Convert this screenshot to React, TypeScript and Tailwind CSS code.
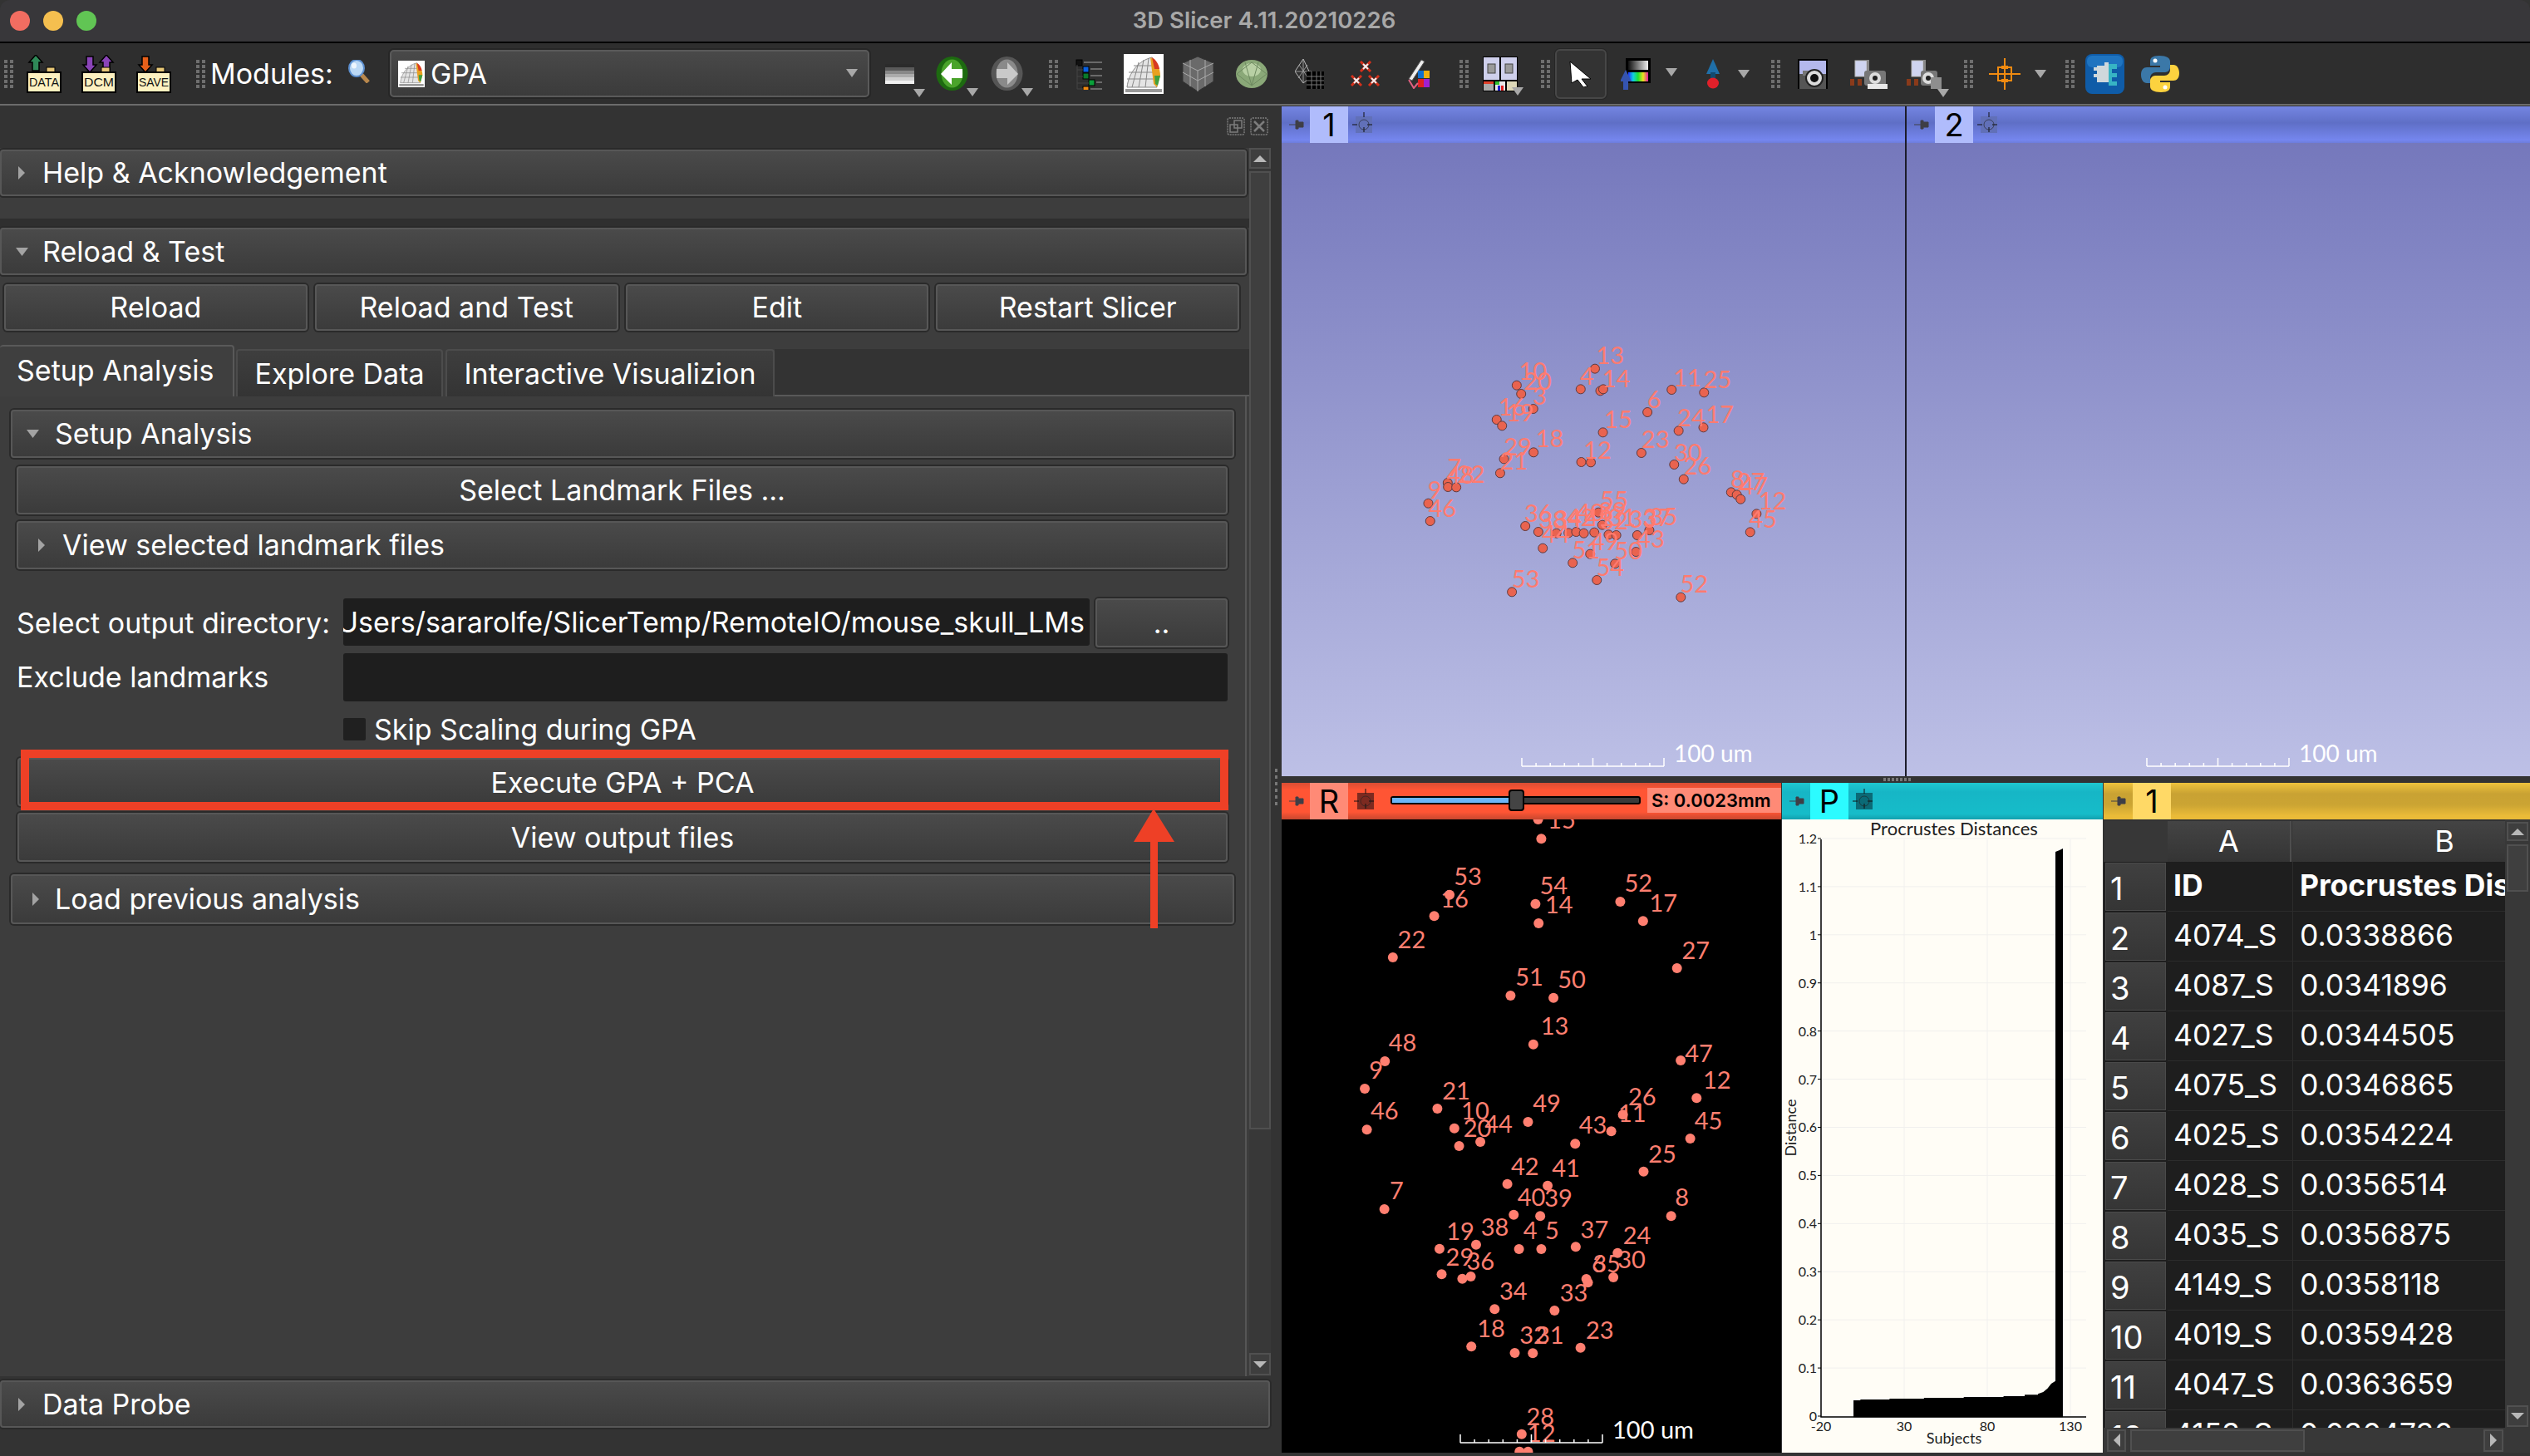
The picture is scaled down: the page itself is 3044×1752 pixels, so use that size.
import React from "react";

type P = [number, number];
type L = [string, number, number];

const FONT = "[font-family:Inter,sans-serif]";

/* ---------- toolbar pieces ---------- */
function Grip({ className }: { className: string }) {
  return (
    <div className={`grid grid-cols-2 gap-x-[3px] gap-y-[2px] w-[11px] shrink-0 ${className}`}>
      {Array.from({ length: 12 }).map((_, i) => (
        <div key={i} className="w-[4px] h-[4px] bg-[#6e6e6e]" />
      ))}
    </div>
  );
}

function Drop({ className }: { className: string }) {
  return (
    <svg className={`absolute ${className}`} width="14" height="10" viewBox="0 0 14 10">
      <path d="M0 0H14L7 10Z" fill="#a8a8a8" />
    </svg>
  );
}

function Clip({ label, arrows }: { label: string; arrows: { x: number; up: boolean; c: string }[] }) {
  return (
    <svg width="42" height="46" viewBox="0 0 42 46">
      {arrows.map((a, i) => (
        <path
          key={i}
          d={
            a.up
              ? `M${a.x} 0l8 9h-4v10h-8v-10h-4z`
              : `M${a.x - 4} 2h8v10h4l-8 9-8-9h4z`
          }
          fill={a.c}
          stroke="#000"
          strokeWidth="1.5"
        />
      ))}
      <rect x="24" y="15" width="10" height="8" fill="#e8c878" stroke="#000" />
      <rect x="1" y="21" width="40" height="24" fill="#fdf1c0" stroke="#000" strokeWidth="2" />
      <text x="21" y="38" textAnchor="middle" fontSize="14" textLength="36" lengthAdjust="spacingAndGlyphs" fill="#111" className="[font-family:'Liberation_Sans',sans-serif]">
        {label}
      </text>
    </svg>
  );
}

function Magnifier() {
  return (
    <svg width="26" height="28" viewBox="0 0 26 28">
      <path d="M16 18l8 9" stroke="#b8874c" strokeWidth="5" />
      <ellipse cx="10" cy="10" rx="9" ry="10" fill="#bcd9f5" stroke="#5c8fcf" strokeWidth="2" />
      <ellipse cx="7" cy="7" rx="3" ry="3.5" fill="#eef6fd" />
    </svg>
  );
}

function GpaGlyph({ w, h }: { w: number; h: number }) {
  return (
    <svg width={w} height={h} viewBox="0 0 48 48">
      <rect width="48" height="48" fill="#fff" />
      <path d="M4 40C6 22 18 8 34 4L40 40Z" fill="#e4e4e4" stroke="#888" />
      <path d="M4 30H38M6 22H38M12 14H38M10 40L18 10M18 40L24 7M26 40L30 5" stroke="#888" strokeWidth="1" fill="none" />
      <path d="M32 4C40 8 44 18 44 26L40 40L36 36Z" fill="#e8a020" />
      <path d="M34 4C39 7 42 12 43 18L37 18Z" fill="#d83a20" />
      <path d="M37 26H44L41 38L38 36Z" fill="#3f9f3f" />
      <rect x="2" y="42" width="44" height="4" fill="#999" />
    </svg>
  );
}

function Arrow({ c, dir }: { c: string; dir: "l" | "r" }) {
  return (
    <svg width="39" height="41" viewBox="0 0 39 41">
      <ellipse cx="19.5" cy="20.5" rx="19" ry="20.5" fill={c} />
      <ellipse cx="19.5" cy="20.5" rx="13" ry="17" fill={dir === "l" ? "#4aa32b" : "#8a8a8a"} />
      {dir === "l" ? (
        <path d="M6 21L19 7v8h13v11H19v8z" fill="#fff" />
      ) : (
        <path d="M33 21L20 7v8H7v11h13v8z" fill="#c9c9c9" />
      )}
    </svg>
  );
}

function Layers() {
  const cols = ["#2b2b2b", "#5a5a5a", "#888", "#ababab", "#cfcfcf", "#f0f0f0"];
  return (
    <div className="flex flex-col w-[35px]">
      {cols.map((c) => (
        <div key={c} className="h-[4px]" style={{ background: c }} />
      ))}
    </div>
  );
}

function Tree() {
  const items: [number, number, string][] = [
    [2, 3, "#111"],
    [10, 11, "#0a60e0"],
    [10, 19, "#0a7a2a"],
    [17, 27, "#0aa03a"],
    [10, 35, "#f08a10"],
  ];
  return (
    <svg width="38" height="38" viewBox="0 0 38 38">
      {items.map(([x, y, c], i) => (
        <g key={i}>
          <rect x={x} y={y - 1} width="7" height="7" fill={c} stroke="#000" />
          <rect x={x + 9} y={y + 1} width={24 - x} height="2" fill="#6a6a6a" />
        </g>
      ))}
      <path d="M3 8V37M3 14H10M3 22H10M3 30H17M3 37H10" stroke="#444" fill="none" />
    </svg>
  );
}

function Cube() {
  return (
    <svg width="39" height="44" viewBox="0 0 39 44">
      <path d="M19 1L38 9V31L19 43L1 31V9Z" fill="#6a6a6a" stroke="#333" />
      <path d="M1 9L19 18L38 9M19 18V43M1 20L19 30L38 20M10 5V37M28 5V37" stroke="#aaa" fill="none" />
    </svg>
  );
}

function Ellipsoid() {
  return (
    <svg width="40" height="36" viewBox="0 0 40 36">
      <ellipse cx="20" cy="18" rx="19" ry="17" fill="#8aa878" />
      <ellipse cx="20" cy="13" rx="11" ry="8" fill="#b8d0a4" />
      <path d="M2 18L20 4L38 18L20 32ZM12 4L20 32L28 4" stroke="#6e8a60" fill="none" />
    </svg>
  );
}

function MeshIcon() {
  return (
    <svg width="36" height="38" viewBox="0 0 36 38">
      <path d="M10 1L20 22L10 30L0 16Z" fill="none" stroke="#bbb" />
      <path d="M10 1V30M0 16H20M5 8L16 24M15 8L4 24" stroke="#999" fill="none" />
      <rect x="14" y="16" width="21" height="21" fill="#000" />
      <path d="M14 22H35M14 27H35M14 32H35M20 16V37M26 16V37M31 16V37" stroke="#777" />
    </svg>
  );
}

function Markups() {
  const pts: P[] = [[18, 7], [7, 24], [28, 24]];
  return (
    <svg width="36" height="32" viewBox="0 0 36 32">
      {pts.map(([x, y], i) => (
        <g key={i} stroke="#f0f0f0" strokeWidth="2">
          <path d={`M${x - 6} ${y - 6}L${x + 6} ${y + 6}M${x + 6} ${y - 6}L${x - 6} ${y + 6}`} stroke="#d8301a" strokeWidth="3" />
          <path d={`M${x - 3} ${y - 3}L${x + 3} ${y + 3}M${x + 3} ${y - 3}L${x - 3} ${y + 3}`} />
        </g>
      ))}
    </svg>
  );
}

function Pen() {
  return (
    <svg width="28" height="36" viewBox="0 0 28 36">
      <path d="M2 24L17 1L21 3L6 26Z" fill="#eee" stroke="#555" />
      <rect x="13" y="14" width="7" height="9" fill="#1070d0" />
      <rect x="20" y="14" width="7" height="9" fill="#f0b010" />
      <rect x="13" y="24" width="7" height="10" fill="#e02020" />
      <rect x="20" y="24" width="7" height="10" fill="#a020d0" />
      <path d="M2 25L8 35L13 29" fill="none" stroke="#e06080" strokeWidth="2" />
    </svg>
  );
}

function LayoutIcon() {
  return (
    <svg width="42" height="42" viewBox="0 0 42 42">
      <rect width="42" height="42" fill="#000" />
      <rect x="1" y="1" width="19" height="27" fill="#cfd0ec" />
      <rect x="22" y="1" width="19" height="27" fill="#cfd0ec" />
      <rect x="6" y="9" width="9" height="11" fill="#9a9a9a" stroke="#444" />
      <rect x="27" y="9" width="9" height="11" fill="#9a9a9a" stroke="#444" />
      <rect x="1" y="30" width="12" height="11" fill="#aaa" />
      <rect x="1" y="30" width="12" height="3" fill="#e0402a" />
      <rect x="15" y="30" width="12" height="11" fill="#e8e8e8" />
      <rect x="15" y="30" width="5" height="4" fill="#30c030" />
      <rect x="18" y="35" width="3" height="6" fill="#2020d0" />
      <rect x="22" y="35" width="3" height="6" fill="#e02020" />
      <rect x="29" y="30" width="12" height="11" fill="#ddd8b8" />
    </svg>
  );
}

function Cursor() {
  return (
    <svg width="28" height="32" viewBox="0 0 28 32">
      <path d="M1 1L26 22H15L22 31L17 32L10 23L3 27Z" fill="#fff" stroke="#000" />
    </svg>
  );
}

function WL() {
  return (
    <svg width="36" height="38" viewBox="0 0 36 38">
      <defs>
        <linearGradient id="wlg" x1="0" x2="1">
          <stop offset="0" stopColor="#111" />
          <stop offset="1" stopColor="#eee" />
        </linearGradient>
        <linearGradient id="wlr" x1="0" x2="1">
          <stop offset="0" stopColor="#2030ff" />
          <stop offset=".25" stopColor="#10d0e0" />
          <stop offset=".5" stopColor="#20e030" />
          <stop offset=".75" stopColor="#f0e020" />
          <stop offset="1" stopColor="#e020a0" />
        </linearGradient>
      </defs>
      <rect x="6" y="0" width="30" height="30" fill="#000" />
      <rect x="9" y="3" width="24" height="11" fill="url(#wlg)" />
      <rect x="9" y="17" width="24" height="11" fill="url(#wlr)" />
      <path d="M6 14l7 14H9v10H3V28H-1z" fill="#3554b0" />
    </svg>
  );
}

function Fiducial() {
  return (
    <svg width="20" height="36" viewBox="0 0 20 36">
      <path d="M10 0L18 18H2Z" fill="#1f6fa8" />
      <rect x="7" y="16" width="6" height="8" fill="#124a70" />
      <ellipse cx="10" cy="29" rx="7" ry="6.5" fill="#e0202a" />
    </svg>
  );
}

function Camera() {
  return (
    <svg width="36" height="36" viewBox="0 0 36 36">
      <rect width="36" height="36" fill="#000" />
      <rect x="2" y="2" width="32" height="32" fill="#b4b8ec" />
      <rect x="2" y="18" width="32" height="18" fill="#555" />
      <rect x="6" y="14" width="7" height="6" fill="#777" />
      <circle cx="20" cy="23" r="10" fill="#dcdcdc" stroke="#222" strokeWidth="2" />
      <circle cx="20" cy="23" r="5" fill="#111" />
    </svg>
  );
}

function CapIcon({ extra }: { extra?: boolean }) {
  return (
    <svg width="46" height="36" viewBox="0 0 46 36">
      <rect x="7" y="2" width="14" height="19" fill="#cfd4f0" stroke="#bbb" />
      <rect x="21" y="1" width="3" height="18" fill="#888" />
      <rect x="1" y="24" width="5" height="8" fill="#8a3a1a" />
      <rect x="10" y="24" width="5" height="8" fill="#8a3a1a" />
      <rect x="18" y="14" width={extra ? 20 : 26} height="18" rx="3" fill="#777" />
      <circle cx={extra ? 27 : 31} cy="23" r="7" fill="#ddd" />
      <circle cx={extra ? 27 : 31} cy="23" r="3" fill="#222" />
      {extra ? <rect x="30" y="22" width="13" height="14" fill="#8e8e8e" /> : <rect x="22" y="30" width="24" height="6" fill="#e8e8e8" />}
    </svg>
  );
}

function Cross() {
  return (
    <svg width="38" height="38" viewBox="0 0 38 38">
      <g stroke="#f08a10" fill="none" strokeWidth="2">
        <path d="M19 0V38M0 19H38" />
        <rect x="11" y="11" width="16" height="16" />
        <path d="M15 11H23M15 27H23" strokeWidth="4" />
      </g>
    </svg>
  );
}

function Ext() {
  return (
    <svg width="47" height="48" viewBox="0 0 47 48">
      <rect width="47" height="48" rx="8" fill="#0f5ca8" />
      <rect x="2" y="2" width="43" height="14" rx="6" fill="#1f74c0" />
      <path d="M14 14h9v-4h5v4h3v8h-3v4h3v8H14v-6h-4v-4h4v-4h-4v-4h4z" fill="#cfd8dc" />
      <path d="M28 12h10v6h-6v5h6v5h-6v5h6v5H28z" fill="#37b4c4" />
    </svg>
  );
}

function Python() {
  const blue = "M23 2c-9 0-11 3-11 7v5h12v2H8c-4 0-7 3-7 9s3 10 7 10h4v-6c0-4 3-7 7-7h11c3 0 6-3 6-6V9c0-4-4-7-13-7z";
  return (
    <svg width="48" height="48" viewBox="0 0 48 48">
      <path d={blue} fill="#3b78a8" />
      <path d={blue} fill="#fcd23f" transform="rotate(180 24 24)" />
      <circle cx="18" cy="8" r="2.5" fill="#fff" />
      <circle cx="30" cy="40" r="2.5" fill="#fff" />
    </svg>
  );
}

function ToolBar() {
  return (
    <div className="h-[73px] shrink-0 bg-[#2e2e2e] flex items-center">
      <Grip className="ml-[5px]" />
      <div className="ml-[16px] w-[42px] shrink-0">
        <Clip label="DATA" arrows={[{ x: 11, up: true, c: "#2f8a58" }]} />
      </div>
      <div className="ml-[24px] w-[42px] shrink-0">
        <Clip label="DCM" arrows={[{ x: 10, up: false, c: "#8a44b8" }, { x: 30, up: true, c: "#8a44b8" }]} />
      </div>
      <div className="ml-[24px] w-[42px] shrink-0">
        <Clip label="SAVE" arrows={[{ x: 11, up: false, c: "#e8601a" }]} />
      </div>
      <Grip className="ml-[30px]" />
      <div className="ml-[6px] w-[146px] shrink-0 text-white text-[34px] leading-none whitespace-nowrap">Modules:</div>
      <div className="ml-[20px] w-[26px] shrink-0 -mt-[6px]">
        <Magnifier />
      </div>
      <div className="ml-[24px] w-[577px] h-[57px] shrink-0 rounded-[5px] bg-gradient-to-b from-[#494949] to-[#3b3b3b] border-2 border-[#5a5a5a] shadow-[0_0_0_2px_#262626] flex items-center pl-[8px] relative">
        <GpaGlyph w={32} h={32} />
        <span className="ml-[7px] text-white text-[34px] leading-none">GPA</span>
        <Drop className="right-[12px] top-[21px]" />
      </div>
      <div className="ml-[19px] w-[35px] shrink-0 relative">
        <Layers />
        <Drop className="left-[34px] top-[30px]" />
      </div>
      <div className="ml-[26px] w-[39px] shrink-0 relative">
        <Arrow c="#1d6a10" dir="l" />
        <Drop className="left-[37px] top-[38px]" />
      </div>
      <div className="ml-[27px] w-[39px] shrink-0 relative">
        <Arrow c="#565656" dir="r" />
        <Drop className="left-[37px] top-[38px]" />
      </div>
      <Grip className="ml-[31px]" />
      <div className="ml-[20px] w-[38px] shrink-0"><Tree /></div>
      <div className="ml-[21px] w-[48px] shrink-0"><GpaGlyph w={48} h={48} /></div>
      <div className="ml-[22px] w-[39px] shrink-0"><Cube /></div>
      <div className="ml-[25px] w-[40px] shrink-0"><Ellipsoid /></div>
      <div className="ml-[32px] w-[36px] shrink-0"><MeshIcon /></div>
      <div className="ml-[31px] w-[36px] shrink-0"><Markups /></div>
      <div className="ml-[32px] w-[28px] shrink-0"><Pen /></div>
      <Grip className="ml-[35px]" />
      <div className="ml-[17px] w-[42px] shrink-0 relative">
        <LayoutIcon />
        <Drop className="left-[35px] top-[37px]" />
      </div>
      <Grip className="ml-[28px]" />
      <div className="ml-[6px] w-[62px] h-[60px] shrink-0 rounded-[6px] bg-[#333] border-2 border-[#474747] shadow-[0_0_0_1px_#262626] flex items-center justify-center">
        <Cursor />
      </div>
      <div className="ml-[17px] w-[36px] shrink-0 relative">
        <WL />
        <Drop className="left-[54px] top-[12px]" />
      </div>
      <div className="ml-[65px] w-[20px] shrink-0 relative">
        <Fiducial />
        <Drop className="left-[40px] top-[13px]" />
      </div>
      <Grip className="ml-[60px]" />
      <div className="ml-[21px] w-[36px] shrink-0"><Camera /></div>
      <div className="ml-[26px] w-[46px] shrink-0"><CapIcon /></div>
      <div className="ml-[22px] w-[46px] shrink-0 relative">
        <CapIcon extra />
        <Drop className="left-[38px] top-[36px]" />
      </div>
      <Grip className="ml-[24px]" />
      <div className="ml-[19px] w-[38px] shrink-0 relative">
        <Cross />
        <Drop className="left-[55px] top-[14px]" />
      </div>
      <Grip className="ml-[54px]" />
      <div className="ml-[13px] w-[47px] shrink-0"><Ext /></div>
      <div className="ml-[19px] w-[48px] shrink-0"><Python /></div>
    </div>
  );
}

/* ---------- left panel ---------- */
const BTN =
  "rounded-[4px] bg-gradient-to-b from-[#4a4a4a] to-[#3b3b3b] border-2 border-[#575757] shadow-[0_0_0_2px_#2a2a2a] text-white text-[34px] leading-none flex items-center whitespace-nowrap";

function Tri({ open, className }: { open: boolean; className: string }) {
  return open ? (
    <svg className={className} width="15" height="10" viewBox="0 0 15 10">
      <path d="M0 0H15L7.5 10Z" fill="#a3a3a3" />
    </svg>
  ) : (
    <svg className={className} width="8" height="16" viewBox="0 0 8 16">
      <path d="M0 0L8 8L0 16Z" fill="#a3a3a3" />
    </svg>
  );
}

function ScrollButton({ up, className }: { up: boolean; className: string }) {
  return (
    <div className={`bg-[#3e3e3e] border-2 border-[#505050] flex items-center justify-center shrink-0 ${className}`}>
      <svg width="16" height="8" viewBox="0 0 16 8">
        <path d={up ? "M8 0L16 8H0Z" : "M0 0H16L8 8Z"} fill="#b8b8b8" />
      </svg>
    </div>
  );
}

function LeftPanel() {
  return (
    <div className="w-[1542px] shrink-0 bg-[#333] flex flex-col relative">
      <div className="h-[51px] shrink-0 flex justify-end items-center gap-[6px] pr-[16px] pb-[2px]">
        <svg width="22" height="22" viewBox="0 0 22 22" fill="none" stroke="#7c7c7c" strokeWidth="1.5">
          <rect x="1" y="1" width="20" height="20" rx="2" strokeDasharray="2 1" />
          <rect x="4" y="9" width="9" height="9" />
          <rect x="9" y="4" width="9" height="9" />
        </svg>
        <svg width="22" height="22" viewBox="0 0 22 22" fill="none" stroke="#7c7c7c" strokeWidth="1.5">
          <rect x="1" y="1" width="20" height="20" rx="2" strokeDasharray="2 1" />
          <path d="M5 5L17 17M17 5L5 17" strokeWidth="2.5" />
        </svg>
      </div>

      <div className="h-[1478px] shrink-0 flex">
        <div className="w-[1503px] shrink-0 bg-[#3d3d3d] flex flex-col relative pt-[2px]">
          <div className={`${BTN} h-[56px] w-[1500px]`}>
            <Tri open={false} className="ml-[20px]" />
            <span className="ml-[21px]">Help &amp; Acknowledgement</span>
          </div>
          <div className="mt-[27px] h-[11px] bg-[#2f2f2f] shrink-0" />
          <div className={`${BTN} h-[57px] w-[1500px] shrink-0`}>
            <Tri open className="ml-[17px]" />
            <span className="ml-[17px]">Reload &amp; Test</span>
          </div>
          <div className="mt-[11px] ml-[5px] w-[1486px] grid grid-cols-4 gap-[9px]">
            {["Reload", "Reload and Test", "Edit", "Restart Slicer"].map((t) => (
              <div key={t} className={`${BTN} h-[56px] justify-center`}>{t}</div>
            ))}
          </div>

          <div className="mt-[17px] h-[62px] flex items-end shrink-0">
            <div className="w-[282px] h-[62px] rounded-t-[4px] bg-[#3f3f3f] border-t-2 border-r-2 border-[#595959] text-white text-[34px] leading-none flex items-center pl-[20px] pb-[2px] whitespace-nowrap">
              Setup Analysis
            </div>
            <div className="ml-[2px] w-[249px] h-[57px] rounded-t-[4px] bg-gradient-to-b from-[#3e3e3e] to-[#343434] border-2 border-b-0 border-[#4c4c4c] text-white text-[34px] leading-none flex items-center justify-center">
              Explore Data
            </div>
            <div className="ml-[3px] w-[396px] h-[57px] rounded-t-[4px] bg-gradient-to-b from-[#3e3e3e] to-[#343434] border-2 border-b-0 border-[#4c4c4c] text-white text-[34px] leading-none flex items-center justify-center whitespace-nowrap">
              Interactive Visualizion
            </div>
            <div className="flex-1 h-[57px] bg-[#333] border-b-2 border-[#595959]" />
          </div>

          <div className="flex-1 flex flex-col border-r-2 border-[#565656] mr-[3px] relative">
            <div className={`${BTN} mt-[16px] ml-[13px] w-[1472px] h-[58px]`}>
              <Tri open className="ml-[17px]" />
              <span className="ml-[19px]">Setup Analysis</span>
            </div>
            <div className={`${BTN} mt-[10px] ml-[20px] w-[1457px] h-[58px] justify-center`}>Select Landmark Files ...</div>
            <div className={`${BTN} mt-[8px] ml-[20px] w-[1457px] h-[58px]`}>
              <Tri open={false} className="ml-[24px]" />
              <span className="ml-[21px]">View selected landmark files</span>
            </div>

            <div className="mt-[35px] flex h-[59px] shrink-0">
              <div className="w-[413px] pl-[20px] text-white text-[34px] leading-none flex items-center whitespace-nowrap">Select output directory:</div>
              <div className="w-[898px] h-[57px] rounded-[3px] bg-[#1e1e1e] text-white text-[34px] leading-none flex items-center justify-end overflow-hidden whitespace-nowrap pr-[6px]">
                /Users/sararolfe/SlicerTemp/RemoteIO/mouse_skull_LMs
              </div>
              <div className={`${BTN} ml-[7px] w-[159px] h-[59px] justify-center`}>..</div>
            </div>
            <div className="mt-[7px] flex h-[58px] shrink-0">
              <div className="w-[413px] pl-[20px] text-white text-[34px] leading-none flex items-center">Exclude landmarks</div>
              <div className="w-[1064px] rounded-[3px] bg-[#1e1e1e]" />
            </div>
            <div className="mt-[20px] ml-[413px] h-[27px] flex items-center shrink-0 text-white text-[34px] leading-none whitespace-nowrap">
              <div className="w-[27px] h-[27px] bg-[#202020] rounded-[2px]" />
              <span className="ml-[10px]">Skip Scaling during GPA</span>
            </div>
            <div className={`${BTN} mt-[21px] ml-[21px] w-[1456px] h-[58px] justify-center pt-[1px]`}>Execute GPA + PCA</div>
            <div className={`${BTN} mt-[8px] ml-[21px] w-[1456px] h-[59px] justify-center`}>View output files</div>
            <div className={`${BTN} mt-[15px] ml-[13px] w-[1472px] h-[60px]`}>
              <Tri open={false} className="ml-[24px]" />
              <span className="ml-[19px]">Load previous analysis</span>
            </div>
          </div>

          {/* annotation over the form */}
          <div className="absolute left-[25px] top-[724px] w-[1453px] h-[73px] border-[10px] border-[#ee4026]" />
          <svg className="absolute left-[1359px] top-[793px]" width="60" height="146" viewBox="0 0 60 146">
            <path d="M29 2L54 42H34V146H25V42H5Z" fill="#ee4026" />
          </svg>
        </div>

        <div className="w-[26px] shrink-0 bg-[#383838] flex flex-col">
          <ScrollButton up className="h-[25px] w-[26px]" />
          <div className="mt-[3px] h-[1153px] bg-[#3f3f3f] border-2 border-[#505050] shrink-0" />
          <div className="flex-1" />
          <ScrollButton up={false} className="h-[27px] w-[26px] mb-[1px]" />
        </div>
      </div>

      <div className={`${BTN} mt-[5px] h-[57px] w-[1528px] shrink-0`}>
        <Tri open={false} className="ml-[20px]" />
        <span className="ml-[21px]">Data Probe</span>
      </div>

      <div className="absolute left-[1534px] top-[798px] flex flex-col gap-[4px]">
        {[0, 1, 2, 3, 4, 5].map((i) => (
          <div key={i} className="w-[3px] h-[4px] bg-[#777]" />
        ))}
      </div>
    </div>
  );
}

/* ---------- view chrome ---------- */
function Pin() {
  return (
    <svg width="18" height="14" viewBox="0 0 18 14">
      <path d="M0 7H8M8 2H11V12H8ZM11 4H17V10H11Z" fill="#3e3e46" stroke="#3e3e46" strokeWidth="1" />
    </svg>
  );
}

function LinkGlyph({ tint }: { tint: string }) {
  return (
    <svg width="28" height="30" viewBox="0 0 28 30">
      <rect x="4" y="5" width="20" height="20" fill={tint} />
      <path d="M14 0V30M0 15H28" stroke="#111" strokeWidth="1" strokeDasharray="6 12 6" />
      <circle cx="14" cy="15" r="6" fill="none" stroke="#222" strokeWidth="1" opacity=".6" />
    </svg>
  );
}

/* ---------- overlays ---------- */
function Scale({ x0, x1, y }: { x0: number; x1: number; y: number }) {
  const w = (x1 - x0) / 10;
  let d = "";
  for (let i = 0; i <= 10; i++) {
    const h = i % 5 === 0 ? 10 : 4;
    d += `M${x0 + i * w} ${y}v-${h}`;
  }
  return <path d={`${d}M${x0} ${y}H${x1}`} stroke="#fff" strokeWidth="1.5" fill="none" />;
}

const LABEL = "[font-family:Lato,sans-serif] font-normal";

const d3: P[] = [[729,131],[684,205],[746,211],[755,205],[483,191],[497,222],[535,276],[420,315],[437,337],[970,207],[1072,217],[894,288],[992,355],[1070,343],[754,361],[536,433],[443,457],[431,508],[686,468],[716,469],[875,435],[978,477],[1008,530],[266,543],[267,558],[293,559],[205,617],[211,681],[1157,577],[1175,586],[1187,602],[1237,655],[1217,721],[510,699],[551,720],[565,779],[608,725],[646,724],[670,720],[694,725],[727,722],[740,650],[752,695],[772,730],[796,732],[862,732],[900,714],[858,792],[714,800],[659,832],[792,835],[735,894],[468,937],[999,956]];
const l3: L[] = [["13",733,113],["4",682,190],["14",752,197],["10",490,170],["20",505,207],["3",533,262],["16",425,300],["19",450,320],["11",975,195],["25",1070,200],["6",893,272],["24",988,340],["17",1078,328],["15",758,345],["18",543,415],["29",442,445],["21",430,495],["12",693,455],["23",875,418],["30",977,465],["26",1007,513],["7",265,520],["48",262,545],["22",295,543],["9",203,600],["46",205,667],["8",1155,560],["27",1175,570],["47",1185,585],["12",1243,640],["45",1213,705],["55",745,635],["36",507,685],["38",552,707],["34",600,705],["40",670,680],["42",640,700],["41",695,700],["39",740,675],["31",770,700],["32",745,710],["33",835,705],["37",880,700],["35",900,697],["44",562,760],["43",860,777],["49",715,785],["51",657,815],["50",790,820],["54",733,878],["53",467,920],["52",997,940]];

const dA: P[] = [[487,198],[493,268],[320,470],[291,547],[482,503],[488,573],[642,495],[685,565],[213,696],[749,735],[435,834],[516,842],[478,1010],[198,1071]];
const dB: P[] = [[160,30],[297,102],[786,64],[164,178],[329,173],[338,237],[378,222],[468,150],[647,124],[625,184],[557,229],[774,210],[686,329],[429,374],[505,380],[197,465],[441,485],[491,490],[738,490],[301,608],[370,593],[451,609],[493,609],[558,601],[637,623],[305,700],[344,716],[360,708],[629,711],[578,717],[581,730],[405,826],[518,831],[361,961],[443,984],[477,985],[567,965],[456,1277],[452,1340],[468,1340],[756,-72]];
const lA: L[] = [["15",505,232],["53",328,435],["16",303,515],["54",490,468],["14",500,537],["52",650,460],["17",697,530],["22",222,662],["27",758,702],["51",444,798],["50",524,808],["13",492,975],["48",205,1035],["9",168,1135],["47",764,1075],["12",798,1170],["21",306,1208]];
const lB: L[] = [["46",171,142],["10",342,140],["49",477,115],["26",657,90],["11",638,150],["20",346,205],["44",386,188],["43",564,193],["45",782,177],["25",695,297],["42",436,342],["41",513,347],["7",207,430],["40",448,452],["39",499,455],["8",745,453],["19",314,577],["38",379,560],["4",459,574],["5",500,574],["37",567,570],["24",647,590],["29",313,668],["36",352,683],["6",588,692],["35",590,692],["30",637,677],["34",414,793],["33",528,797],["18",372,928],["32",452,950],["31",483,950],["23",577,932],["28",465,1245],["12",467,1305]];

function View3D({ first }: { first: boolean }) {
  return (
    <div className={`relative flex flex-col ${first ? "w-[750px]" : "flex-1"}`}>
      <div className="h-[44px] shrink-0 bg-[linear-gradient(#7485e2,#5f6fc6_45%,#7586ee_92%,#6d7ddc)] flex items-center">
        <div className="ml-[9px] w-[18px]"><Pin /></div>
        <div className="ml-[7px] w-[46px] h-[44px] bg-[#b0bcfc] text-black text-[38px] leading-[44px] text-center">{first ? "1" : "2"}</div>
        <div className="ml-[5px] w-[28px]"><LinkGlyph tint="#6170b8" /></div>
      </div>
      <div className="flex-1 relative bg-[linear-gradient(#7578bc,#bdc0e6)]">
        <svg className="absolute inset-0 w-full h-full" viewBox={first ? "1542 172 750 762" : "2294 172 750 762"}>
          {first &&
            d3.map(([x, y], i) => (
              <circle key={i} cx={1640 + x / 2.613} cy={400 + y / 3} r="5.5" fill="#e9634f" stroke="#5e3a3e" strokeWidth="1" />
            ))}
          {first &&
            l3.map(([t, x, y], i) => (
              <text key={i} x={1640 + x / 2.613} y={400 + y / 3} fontSize="29" fill="#ff7b70" className={LABEL}>{t}</text>
            ))}
          <Scale x0={first ? 1831 : 2583} x1={first ? 2002 : 2754} y={922} />
          <text x={first ? 2014 : 2766} y={917} fontSize="28" fill="#fff" className={LABEL}>100 um</text>
        </svg>
      </div>
    </div>
  );
}

function RedView() {
  const zA = (x: number, y: number): P => [1540 + x / 1.568, 920 + y / 3];
  const zB = (x: number, y: number): P => [1540 + x / 1.568, 1300 + y / 3];
  return (
    <div className="w-[601px] flex flex-col shrink-0">
      <div className="h-[44px] shrink-0 bg-[linear-gradient(#d94e34,#ff5534_20%,#ff5534_80%,#c7472f)] flex items-center">
        <div className="ml-[9px] w-[18px]"><Pin /></div>
        <div className="ml-[7px] w-[46px] h-[44px] bg-[#ff8a76] text-black text-[38px] leading-[44px] text-center">R</div>
        <div className="ml-[7px] w-[28px]"><LinkGlyph tint="#7c2a20" /></div>
        <div className="ml-[16px] -mt-[2px] w-[301px] h-[10px] rounded-[3px] bg-[#3a3a3a] border-2 border-black relative shrink-0">
          <div className="w-[142px] h-full bg-[#6cb6f8]" />
          <div className="absolute left-[140px] -top-[10px] w-[19px] h-[26px] rounded-[4px] bg-[#444] border-2 border-black" />
        </div>
        <div className="ml-[8px] flex-1 h-[30px] -mt-[2px] bg-[#ff8a76] text-black font-semibold text-[22px] leading-[30px] pl-[5px] whitespace-nowrap">S: 0.0023mm</div>
      </div>
      <div className="flex-1 relative bg-black">
        <svg className="absolute inset-0 w-full h-full" viewBox="1542 986 601 762">
          {dA.map(([x, y], i) => {
            const [cx, cy] = zA(x, y);
            return <circle key={`a${i}`} cx={cx} cy={cy} r="6" fill="#ff7f70" />;
          })}
          {dB.map(([x, y], i) => {
            const [cx, cy] = zB(x, y);
            return <circle key={`b${i}`} cx={cx} cy={cy} r="6" fill="#ff7f70" />;
          })}
          {lA.map(([t, x, y], i) => {
            const [tx, ty] = zA(x, y);
            return <text key={`la${i}`} x={tx} y={ty} fontSize="29" fill="#ff7f70" className={LABEL}>{t}</text>;
          })}
          {lB.map(([t, x, y], i) => {
            const [tx, ty] = zB(x, y);
            return <text key={`lb${i}`} x={tx} y={ty} fontSize="29" fill="#ff7f70" className={LABEL}>{t}</text>;
          })}
          <Scale x0={1757} x1={1928} y={1736} />
          <text x={1940} y={1731} fontSize="29" fill="#fff" className={LABEL}>100 um</text>
        </svg>
      </div>
    </div>
  );
}

function PlotView() {
  const yOf = (v: number) => 1704 - v * 579.2;
  const yTicks = [0, 0.1, 0.2, 0.3, 0.4, 0.5, 0.6, 0.7, 0.8, 0.9, 1, 1.1, 1.2];
  const xTicks: [string, number][] = [["-20", 2191], ["30", 2291], ["80", 2391], ["130", 2491]];
  const b = (x: number, y: number) => `${1540 + x / 1.568} ${1300 + y / 3}`;
  const bars = [
    b(1082, 1216), b(1082, 1155), b(1095, 1155), b(1095, 1152), b(1150, 1152), b(1150, 1149), b(1215, 1149), b(1215, 1146),
    b(1290, 1146), b(1290, 1143), b(1365, 1143), b(1365, 1140), b(1405, 1140), b(1405, 1135), b(1430, 1135), b(1430, 1132),
    b(1440, 1125), b(1448, 1112), b(1455, 1095), b(1463, 1085), "2473 1025", "2478 1023", "2482 1021", b(1477, 1216),
  ].join(" L");
  return (
    <div className="w-[386px] ml-[1px] flex flex-col shrink-0">
      <div className="h-[44px] shrink-0 bg-[linear-gradient(#1fc8d0,#16b6c6_25%,#16bcc9_85%,#12a0ae)] flex items-center">
        <div className="ml-[9px] w-[18px]"><Pin /></div>
        <div className="ml-[7px] w-[46px] h-[44px] bg-[#2cfbff] text-black text-[38px] leading-[44px] text-center">P</div>
        <div className="ml-[5px] w-[28px]"><LinkGlyph tint="#0b6a76" /></div>
      </div>
      <div className="flex-1 relative bg-[#fffdf6]">
        <svg className="absolute inset-0 w-full h-full" viewBox="2144 986 386 762">
          {yTicks.map((v) => (
            <path key={v} d={`M2191 ${yOf(v)}H2510`} stroke="#f1f0ee" strokeWidth="1" />
          ))}
          {xTicks.map(([, x]) => (
            <path key={x} d={`M${x} 1010V1705`} stroke="#f1f0ee" strokeWidth="1" />
          ))}
          <path d={`M${bars}Z`} fill="#000" />
          <path d="M2191 1010V1705H2510" stroke="#000" strokeWidth="1.5" fill="none" />
          {yTicks.map((v) => (
            <g key={v}>
              <path d={`M2187 ${yOf(v)}H2191`} stroke="#000" />
              <text x="2186" y={yOf(v) + 6} fontSize="16" textAnchor="end" fill="#222" className={LABEL}>{v}</text>
            </g>
          ))}
          {xTicks.map(([t, x]) => (
            <text key={t} x={x} y="1722" fontSize="16" textAnchor="middle" fill="#222" className={LABEL}>{t}</text>
          ))}
          <text x="2351" y="1005" fontSize="22" textAnchor="middle" fill="#222" className={LABEL}>Procrustes Distances</text>
          <text x="2351" y="1737" fontSize="18" textAnchor="middle" fill="#222" className={LABEL}>Subjects</text>
          <text transform="translate(2161 1357) rotate(-90)" fontSize="18" textAnchor="middle" fill="#222" className={LABEL}>Distance</text>
        </svg>
      </div>
    </div>
  );
}

const ROWS: [string, string][] = [
  ["4074_S", "0.0338866"],
  ["4087_S", "0.0341896"],
  ["4027_S", "0.0344505"],
  ["4075_S", "0.0346865"],
  ["4025_S", "0.0354224"],
  ["4028_S", "0.0356514"],
  ["4035_S", "0.0356875"],
  ["4149_S", "0.0358118"],
  ["4019_S", "0.0359428"],
  ["4047_S", "0.0363659"],
  ["4153_S", "0.0364736"],
];

function TableRow({ n, a, b, bold }: { n: number; a: string; b: string; bold?: boolean }) {
  return (
    <div className="h-[60px] shrink-0 flex">
      <div className="w-[73px] h-[58px] ml-[2px] mt-[1px] shrink-0 bg-gradient-to-b from-[#404040] to-[#353535] border border-[#4a4a4a] text-white text-[38px] leading-[60px] pl-[5px]">{n}</div>
      <div className={`ml-[2px] w-[151px] shrink-0 border-r border-b border-[#2c2c2c] pl-[7px] text-white text-[35.5px] leading-[58px] whitespace-nowrap overflow-hidden ${bold ? "font-bold" : ""}`}>{a}</div>
      <div className={`w-[366px] shrink-0 border-b border-[#2c2c2c] pl-[8px] text-white text-[35.5px] leading-[58px] whitespace-nowrap overflow-hidden ${bold ? "font-bold" : ""}`}>{b}</div>
    </div>
  );
}

function TableView() {
  return (
    <div className="flex-1 ml-[1px] flex flex-col min-w-0">
      <div className="h-[44px] shrink-0 bg-[linear-gradient(#eec23c,#c9a233_30%,#cba433_60%,#eabb38_90%)] flex items-center">
        <div className="ml-[9px] w-[18px]"><Pin /></div>
        <div className="ml-[8px] w-[46px] h-[44px] bg-[#ffd966] text-black text-[38px] leading-[44px] text-center">1</div>
      </div>
      <div className="flex-1 min-h-0 flex bg-[#333]">
        <div className="w-[483px] shrink-0 flex flex-col overflow-hidden bg-[#1e1e1e]">
          <div className="h-[51px] shrink-0 flex bg-[#333] pt-[2px]">
            <div className="w-[76px] shrink-0 bg-[#373737] ml-[1px]" />
            <div className="w-[149px] shrink-0 bg-gradient-to-b from-[#444] to-[#343434] border-r-2 border-[#4e4e4e] text-white text-[36px] leading-[48px] text-center">A</div>
            <div className="w-[366px] shrink-0 ml-[1px] bg-gradient-to-b from-[#444] to-[#343434] text-white text-[36px] leading-[48px] text-center">B</div>
          </div>
          <TableRow n={1} a="ID" b="Procrustes Distance" bold />
          {ROWS.map(([a, b], i) => (
            <TableRow key={a} n={i + 2} a={a} b={b} />
          ))}
        </div>
        <div className="flex-1 flex flex-col items-center pt-[3px] pb-[1px] bg-[#383838]">
          <ScrollButton up className="h-[23px] w-[26px]" />
          <div className="mt-[4px] h-[57px] w-[26px] bg-[#3f3f3f] border-2 border-[#505050]" />
          <div className="flex-1" />
          <ScrollButton up={false} className="h-[26px] w-[26px]" />
        </div>
      </div>
      <div className="h-[30px] shrink-0 bg-[#383838] flex items-center">
        <div className="ml-[4px] w-[23px] h-[27px] bg-[#3e3e3e] border-2 border-[#505050] flex items-center justify-center">
          <svg width="8" height="16" viewBox="0 0 8 16"><path d="M8 0V16L0 8Z" fill="#b8b8b8" /></svg>
        </div>
        <div className="ml-[5px] w-[210px] h-[27px] bg-[#3f3f3f] border-2 border-[#505050]" />
        <div className="ml-[215px] w-[24px] h-[27px] bg-[#3e3e3e] border-2 border-[#505050] flex items-center justify-center">
          <svg width="8" height="16" viewBox="0 0 8 16"><path d="M0 0V16L8 8Z" fill="#b8b8b8" /></svg>
        </div>
      </div>
    </div>
  );
}

export default function App() {
  return (
    <div className={`w-[3044px] h-[1752px] overflow-hidden bg-[#333] flex flex-col relative ${FONT}`}>
      <div className="h-[50px] shrink-0 bg-[#38373a] flex items-center relative rounded-t-[12px]">
        <div className="ml-[12px] flex gap-[16px]">
          <div className="w-[24px] h-[24px] rounded-full bg-[#f26d61]" />
          <div className="w-[24px] h-[24px] rounded-full bg-[#f5bf4f]" />
          <div className="w-[24px] h-[24px] rounded-full bg-[#61c554]" />
        </div>
        <div className="absolute left-0 right-0 pr-[2px] text-center text-[#a8a8a8] font-semibold text-[27.5px] leading-none">3D Slicer 4.11.20210226</div>
      </div>
      <div className="h-[2px] shrink-0 bg-black" />
      <ToolBar />
      <div className="h-[2px] shrink-0 bg-[#6b6b6b]" />
      <div className="flex-1 min-h-0 flex">
        <LeftPanel />
        <div className="flex-1 min-w-0 flex flex-col">
          <div className="mt-[1px] h-[806px] shrink-0 flex">
            <View3D first />
            <div className="w-[2px] bg-[#1c1c2a] shrink-0" />
            <View3D first={false} />
          </div>
          <div className="h-[8px] shrink-0 flex justify-center items-center gap-[2px] pr-[22px]">
            {[0, 1, 2, 3, 4, 5, 6].map((i) => (
              <div key={i} className="w-[3px] h-[4px] bg-[#777]" />
            ))}
          </div>
          <div className="h-[806px] shrink-0 flex">
            <RedView />
            <PlotView />
            <TableView />
          </div>
        </div>
      </div>
    </div>
  );
}
